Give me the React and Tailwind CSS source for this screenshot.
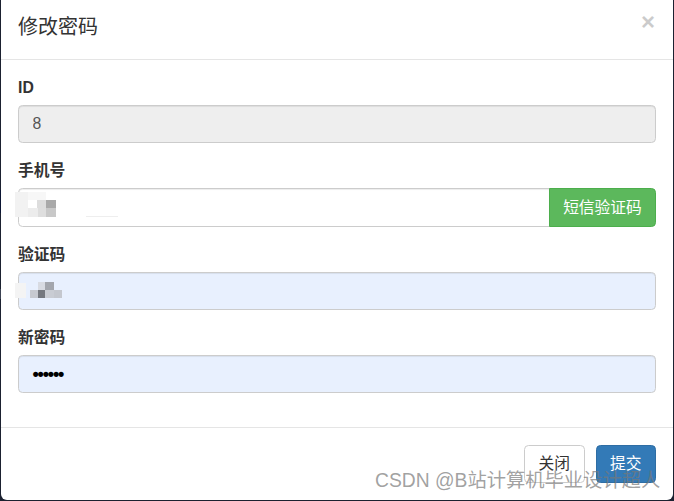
import React from 'react';

const FONT = "font-['Liberation_Sans','Noto_Sans_CJK_SC',sans-serif]";

// blurred pixels over the phone and code inputs
const phoneMosaic = [
  { x: 15, y: 192, w: 13, h: 25, c: '#f2f2f2' },
  { x: 28, y: 192, w: 18, h: 8, c: '#f7f7f7' },
  { x: 37, y: 200, w: 9, h: 8, c: '#dddddd' },
  { x: 46, y: 200, w: 10, h: 8, c: '#a9a9a9' },
  { x: 28, y: 208, w: 10, h: 9, c: '#ececec' },
  { x: 38, y: 208, w: 8, h: 9, c: '#dedede' },
  { x: 46, y: 208, w: 10, h: 9, c: '#c8c8c8' },
  { x: 86, y: 216, w: 32, h: 1, c: '#eeeeee' },
];

const codeMosaic = [
  { x: 15, y: 283, w: 11, h: 15, c: '#f4f4f4' },
  { x: 38, y: 282, w: 7, h: 8, c: '#d8dbe2' },
  { x: 45, y: 282, w: 9, h: 8, c: '#a3a6ad' },
  { x: 30, y: 290, w: 8, h: 8, c: '#c6c9d0' },
  { x: 38, y: 290, w: 7, h: 8, c: '#75787f' },
  { x: 45, y: 290, w: 9, h: 8, c: '#c9ccd3' },
  { x: 54, y: 290, w: 8, h: 8, c: '#c4c7ce' },
];

function Field({ label, children }) {
  return (
    <div className="mb-[16.875px]">
      <label className="block mb-[5.625px] text-[15.75px] leading-[22.5px] font-bold text-[#333]">
        {label}
      </label>
      {children}
    </div>
  );
}

export default function App() {
  return (
    <div className={`relative w-[674px] h-[501px] bg-[#1b2130] overflow-hidden ${FONT}`}>
      {/* page behind the modal, peeking out on the left */}
      <div className="absolute left-0 top-[190px] w-[6px] h-[23px] bg-[#0b1533]" />
      <div className="absolute left-0 top-[289px] w-[6px] h-[10px] bg-[#3b4252]" />

      <div className="relative ml-px w-[672px] h-[500px] bg-white rounded-b-[6px]">
        {/* Header */}
        <div className="flex justify-between items-start px-[17px] pt-[13px] pb-[17px] border-b border-[#e5e5e5]">
          <h4 className="text-[20px] leading-[29px] font-normal text-[#333]">修改密码</h4>
          <button className="text-[24px] leading-none font-bold text-black opacity-20 -mt-[3px] mr-px">
            ×
          </button>
        </div>

        {/* Body */}
        <div className="px-[17px] pt-[17px] pb-[16.875px]">
          <Field label="ID">
            <input
              disabled
              value="8"
              readOnly
              className="block w-full h-[38.25px] px-[13.5px] text-[15.75px] text-[#555] bg-[#eeeeee] border border-[#cccccc] rounded-[4.5px] shadow-[inset_0_1px_1px_rgba(0,0,0,0.075)] outline-none"
            />
          </Field>

          <Field label="手机号">
            <div className="flex">
              <input
                readOnly
                value=""
                className="block flex-1 h-[38.25px] px-[13.5px] text-[15.75px] text-[#555] bg-white border border-[#cccccc] rounded-l-[4.5px] shadow-[inset_0_1px_1px_rgba(0,0,0,0.075)] outline-none"
              />
              <button className="h-[38.25px] w-[107px] text-[15.75px] text-white bg-[#5cb85c] border border-[#4cae4c] rounded-r-[4.5px] -ml-px">
                短信验证码
              </button>
            </div>
          </Field>

          <Field label="验证码">
            <input
              readOnly
              value=""
              className="block w-full h-[38.25px] px-[13.5px] text-[15.75px] text-[#555] bg-[#e8f0fe] border border-[#cccccc] rounded-[4.5px] shadow-[inset_0_1px_1px_rgba(0,0,0,0.075)] outline-none"
            />
          </Field>

          <Field label="新密码">
            <div className="flex items-center w-full h-[38.25px] px-[13.5px] bg-[#e8f0fe] border border-[#cccccc] rounded-[4.5px] shadow-[inset_0_1px_1px_rgba(0,0,0,0.075)]">
              <span className="text-[18px] leading-none tracking-[-1.2px] font-bold text-black">••••••</span>
            </div>
          </Field>
        </div>

        {/* Footer */}
        <div className="flex justify-end gap-[11px] px-[17px] pt-[16.875px] pb-[16.875px] border-t border-[#e5e5e5]">
          <button className="h-[38.25px] px-[13.5px] text-[15.75px] text-[#333] bg-white border border-[#cccccc] rounded-[4.5px]">
            关闭
          </button>
          <button className="h-[38.25px] px-[13.5px] text-[15.75px] text-white bg-[#337ab7] border border-[#2e6da4] rounded-[4.5px]">
            提交
          </button>
        </div>

        {/* watermark */}
        <div className="absolute left-[374px] top-[468px] text-[19.3px] leading-[26px] text-[rgba(120,120,120,0.7)] whitespace-nowrap pointer-events-none">
          CSDN @B站计算机毕业设计超人
        </div>
      </div>

      {phoneMosaic.concat(codeMosaic).map((m, i) => (
        <div
          key={i}
          className="absolute"
          style={{ left: m.x, top: m.y, width: m.w, height: m.h, background: m.c }}
        />
      ))}
    </div>
  );
}
